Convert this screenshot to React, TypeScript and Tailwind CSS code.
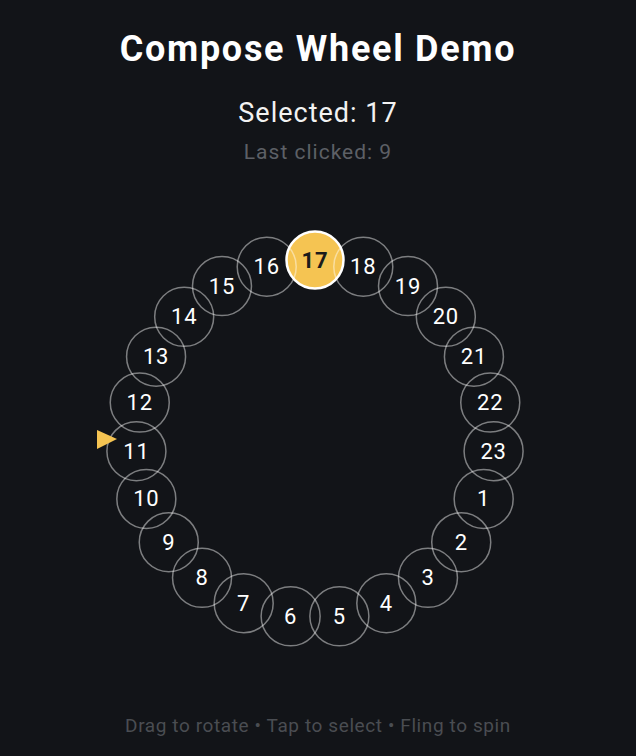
import React from 'react';

const CX = 315;
const CY = 258;
const R = 179;
const COUNT = 23;
const SELECTED = 17;

// 17 sits at the top, numbers run clockwise 17..23, 1..16
const items = Array.from({ length: COUNT }, (_, i) => {
  const value = ((SELECTED - 1 + i) % COUNT) + 1;
  const angle = (-90 + (360 / COUNT) * i) * (Math.PI / 180);
  return { value, x: CX + R * Math.cos(angle), y: CY + R * Math.sin(angle) };
});

function Wheel() {
  return (
    <svg width={636} height={480} viewBox="0 0 636 480" className="block">
      {items.map(item =>
        item.value === SELECTED ? (
          <g key={item.value}>
            <circle cx={item.x} cy={item.y} r={28.5} fill="#f5c452" stroke="#ffffff" strokeWidth={2.5} />
            <text
              x={item.x}
              y={item.y}
              textAnchor="middle"
              dominantBaseline="central"
              fill="#1b1b1b"
              fontSize={22}
              fontWeight={700}
              letterSpacing={0.8}
              fontFamily="Roboto, sans-serif"
            >
              {item.value}
            </text>
          </g>
        ) : (
          <g key={item.value}>
            <circle cx={item.x} cy={item.y} r={29.5} fill="none" stroke="rgba(255,255,255,0.45)" strokeWidth={1.5} />
            <text
              x={item.x}
              y={item.y}
              textAnchor="middle"
              dominantBaseline="central"
              fill="#ffffff"
              fontSize={22}
              letterSpacing={0.8}
              fontFamily="Roboto, sans-serif"
            >
              {item.value}
            </text>
          </g>
        )
      )}
      {/* pointer */}
      <polygon points="97,249 117,258 97,268" fill="#f5c452" />
    </svg>
  );
}

export default function App() {
  return (
    <div className="w-[636px] h-[756px] bg-[#121418] flex flex-col items-center font-['Roboto',sans-serif] overflow-hidden">
      <h1 className="mt-[29px] text-[36px] leading-[40px] font-bold tracking-[1.7px] text-white">
        Compose Wheel Demo
      </h1>
      <p className="mt-[28px] text-[27px] leading-[32px] tracking-[1px] text-[#f2f2f2]">Selected: 17</p>
      <p className="mt-[10px] text-[21px] leading-[26px] tracking-[1px] text-[#5d6066]">Last clicked: 9</p>
      <div className="mt-[16px]">
        <Wheel />
      </div>
      <p className="mt-[53px] text-[19px] leading-[24px] tracking-[0.6px] text-[#4a4d52]">
        Drag to rotate • Tap to select • Fling to spin
      </p>
    </div>
  );
}
